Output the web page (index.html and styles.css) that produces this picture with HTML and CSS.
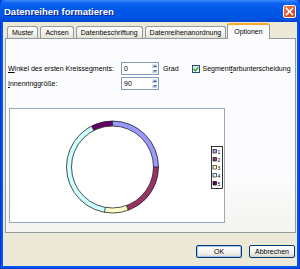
FILE: index.html
```html
<!DOCTYPE html>
<html lang="de">
<head>
    <meta charset="UTF-8">
    <title>Datenreihen formatieren</title>
    <link rel="stylesheet" href="styles.css">
</head>
<body>
    <div class="window">
        <div class="titlebar">
            <span class="title">Datenreihen formatieren</span>
            <button class="close" aria-label="Schließen">
                <svg width="9" height="9" viewBox="0 0 9 9">
                    <path d="M1.5 1.5 L7.5 7.5 M7.5 1.5 L1.5 7.5" stroke="#fff" stroke-width="1.6" stroke-linecap="square"/>
                </svg>
            </button>
        </div>

        <div class="content">
            <div class="tabs">
                <div class="tab">Muster</div>
                <div class="tab">Achsen</div>
                <div class="tab">Datenbeschriftung</div>
                <div class="tab">Datenreihenanordnung</div>
                <div class="tab active">Optionen</div>
            </div>

            <div class="panel">
                <div class="row">
                    <label class="field-label"><u>W</u>inkel des ersten Kreissegments:</label>
                    <div class="spin">
                        <input class="spin-input" value="0">
                        <div class="spin-buttons">
                            <span class="arrow up"></span>
                            <span class="arrow down"></span>
                        </div>
                    </div>
                    <span class="unit">Grad</span>
                    <label class="check">
                        <span class="box">
                            <svg width="6" height="6" viewBox="0 0 6 6">
                                <path d="M0.6 3 L2.3 4.7 L5.4 1.2" fill="none" stroke="#21a121" stroke-width="1.3"/>
                            </svg>
                        </span>
                        <span>Segment<u>f</u>arbunterscheidung</span>
                    </label>
                </div>
                <div class="row">
                    <label class="field-label"><u>I</u>nnenringgröße:</label>
                    <div class="spin">
                        <input class="spin-input" value="90">
                        <div class="spin-buttons">
                            <span class="arrow up"></span>
                            <span class="arrow down"></span>
                        </div>
                    </div>
                </div>

                <div class="preview">
                    <svg width="214" height="113" viewBox="0 0 214 113">
                        <!-- ring segments, clockwise from 12 o'clock -->
                        <g fill="none" stroke-width="5">
                            <path d="M102.5 14.5 A43.5 43.5 0 0 1 146 58" stroke="#9999ff"/>
                            <path d="M146 58 A43.5 43.5 0 0 1 117.38 98.88" stroke="#993366"/>
                            <path d="M117.38 98.88 A43.5 43.5 0 0 1 94.95 100.84" stroke="#ffffcc"/>
                            <path d="M94.95 100.84 A43.5 43.5 0 0 1 82.75 19.24" stroke="#ccffff"/>
                            <path d="M82.75 19.24 A43.5 43.5 0 0 1 102.5 14.5" stroke="#660066"/>
                        </g>
                        <g fill="none" stroke="#222" stroke-width="0.8">
                            <circle cx="102.5" cy="58" r="46"/>
                            <circle cx="102.5" cy="58" r="41"/>
                            <path d="M102.5 12 V17 M148.5 58 H143.5 M118.2 101.2 L116.5 96.5 M94.5 103.3 L95.4 98.4 M81.6 17 L83.9 21.5"/>
                        </g>
                        <!-- legend -->
                        <rect x="201.5" y="37.5" width="11" height="42" fill="#fff" stroke="#000" stroke-width="0.8"/>
                        <g stroke="#000" stroke-width="0.6">
                            <rect x="203" y="40.5" width="3.5" height="3.5" fill="#9999ff"/>
                            <rect x="203" y="48.5" width="3.5" height="3.5" fill="#993366"/>
                            <rect x="203" y="56.5" width="3.5" height="3.5" fill="#ffffcc"/>
                            <rect x="203" y="64.5" width="3.5" height="3.5" fill="#ccffff"/>
                            <rect x="203" y="72.5" width="3.5" height="3.5" fill="#660066"/>
                        </g>
                        <g class="legend-text">
                            <text x="207.5" y="44.5">1</text>
                            <text x="207.5" y="52.5">2</text>
                            <text x="207.5" y="60.5">3</text>
                            <text x="207.5" y="68.5">4</text>
                            <text x="207.5" y="76.5">5</text>
                        </g>
                    </svg>
                </div>
            </div>

            <div class="actions">
                <button class="btn default">OK</button>
                <button class="btn">Abbrechen</button>
            </div>
        </div>
    </div>
</body>
</html>
```

FILE: styles.css
```css
body {
    margin: 0;
    font-family: "Liberation Sans", Arial, sans-serif;
    font-size: 7px;
    color: #000;
    background-color: #0a4fd8;
}

.window {
    width: 300px;
    height: 269px;
    display: flex;
    flex-direction: column;
    box-sizing: border-box;
    background-color: #0058ee;
    border-left: 1px solid #0831d9;
    border-right: 1px solid #0831d9;
    border-bottom: 1px solid #0831d9;
}

.titlebar {
    height: 22px;
    display: flex;
    align-items: center;
    justify-content: space-between;
    padding: 0 2px 0 4px;
    margin: 0 -1px;
    background: linear-gradient(#3c8dfb 0%, #0c63f0 14%, #0057e8 45%, #0054e3 80%, #0046cf 100%);
    border-radius: 6px 6px 0 0;
}

.title {
    color: #fff;
    font-weight: bold;
    font-size: 9.5px;
    text-shadow: 1px 1px 0 #0a1e8c;
    padding-top: 1px;
}

.close {
    width: 13px;
    height: 13px;
    padding: 0;
    margin-right: 2px;
    display: flex;
    align-items: center;
    justify-content: center;
    border: 1px solid #fff;
    border-radius: 2px;
    background: linear-gradient(135deg, #f08a6a 0%, #e2582f 45%, #c8401c 100%);
}

.content {
    flex: 1;
    margin: 0 2px 2px;
    background-color: #ece9d8;
    display: flex;
    flex-direction: column;
}

.tabs {
    height: 16px;
    display: flex;
    align-items: flex-end;
    gap: 2px;
    padding-left: 4px;
    position: relative;
    z-index: 1;
}

.tab {
    height: 12px;
    line-height: 12px;
    padding: 0 4px;
    border: 1px solid #919b9c;
    border-bottom: none;
    border-radius: 3px 3px 0 0;
    background: linear-gradient(#ffffff, #f3f2ec 60%, #e4e1d6);
    box-sizing: border-box;
    white-space: nowrap;
}

.tab.active {
    height: 16px;
    line-height: 14px;
    padding: 0 6px;
    margin-bottom: -1px;
    margin-left: -1px;
    background: #fcfcfe;
    border-top: 2px solid #f5a82c;
}

.panel {
    height: 195px;
    margin: 0 1px 0 2px;
    padding: 23px 2px 0;
    box-sizing: border-box;
    border: 1px solid #919b9c;
    background: linear-gradient(#fcfcfe 70%, #f4f3ee);
    display: flex;
    flex-direction: column;
    gap: 2px;
}

.row {
    display: flex;
    align-items: center;
    height: 13px;
}

.field-label {
    width: 113px;
}

.spin {
    display: flex;
    height: 13px;
    border: 1px solid #7f9db9;
    box-sizing: border-box;
    background-color: #fff;
}

.spin-input {
    width: 25px;
    border: none;
    padding: 0 2px;
    font: inherit;
    outline: none;
}

.spin-buttons {
    width: 7px;
    display: flex;
    flex-direction: column;
}

.arrow {
    flex: 1;
    display: flex;
    align-items: center;
    justify-content: center;
    background: linear-gradient(#dfe9ff, #b8cdf8);
    border: 1px solid #fff;
    border-radius: 1px;
}

.arrow::after {
    content: "";
    border-left: 2px solid transparent;
    border-right: 2px solid transparent;
}

.arrow.up::after {
    border-bottom: 2px solid #4d6185;
}

.arrow.down::after {
    border-top: 2px solid #4d6185;
}

.unit {
    margin-left: 4px;
}

.check {
    display: flex;
    align-items: center;
    gap: 3px;
    margin-left: 13px;
}

.box {
    width: 8px;
    height: 8px;
    box-sizing: border-box;
    border: 1px solid #1c5180;
    background: linear-gradient(135deg, #dcdcd6, #ffffff);
    display: flex;
    align-items: center;
    justify-content: center;
}

.preview {
    width: 216px;
    height: 115px;
    margin: 16px 0 0 1px;
    box-sizing: border-box;
    border: 1px solid #9aa9b8;
    background-color: #fff;
}

.preview svg {
    display: block;
}

.legend-text {
    font-family: "Liberation Sans", Arial, sans-serif;
    font-size: 5px;
}

.actions {
    display: flex;
    justify-content: flex-end;
    gap: 7px;
    padding: 12px 2px 0 0;
}

.btn {
    width: 46px;
    height: 13px;
    padding: 0;
    font: inherit;
    border: 1px solid #003c74;
    border-radius: 2px;
    background: linear-gradient(#ffffff, #f0efea 70%, #d8d2c6);
}

.btn.default {
    box-shadow: inset 0 0 0 1px #a8c1f0;
}
```
